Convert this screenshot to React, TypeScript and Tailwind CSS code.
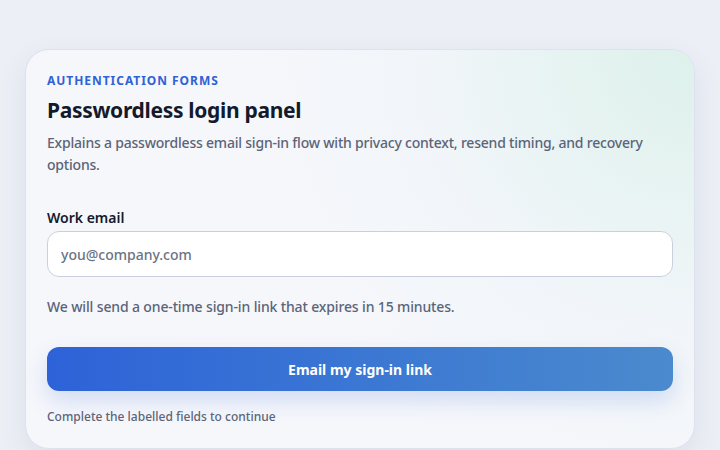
import React from 'react';

export default function App() {
  return (
    <div
      className="w-[720px] h-[450px] overflow-hidden bg-[#eceff6] pt-[49px] px-[25px]"
      style={{ fontFamily: '"Noto Sans", "Open Sans", sans-serif' }}
    >
      <div className="relative h-[400px] rounded-[24px] border border-[#dde2ec] bg-[#f6f7fb] shadow-[0_10px_30px_rgba(30,50,90,0.08)] overflow-hidden">
        {/* soft tint top-right */}
        <div className="pointer-events-none absolute inset-0 bg-[radial-gradient(circle_at_100%_0%,rgba(200,236,222,0.55),rgba(230,242,245,0.3)_35%,rgba(246,247,251,0)_60%)]" />

        <div className="relative flex flex-col px-[21px] pt-[23px]">
          <div className="text-[12px] font-bold tracking-[0.08em] uppercase text-[#2f62d5] leading-[16px]">
            Authentication forms
          </div>
          <h1 className="mt-[6px] text-[21px] font-bold text-[#141a2b] leading-[30px] tracking-[-0.015em]">
            Passwordless login panel
          </h1>
          <p className="mt-[7px] text-[14px] font-medium leading-[22px] text-[#5b6478] tracking-[-0.015em] pr-[20px]">
            Explains a passwordless email sign-in flow with privacy context, resend timing, and recovery options.
          </p>

          <label className="mt-[32px] text-[14px] font-semibold text-[#141a2b] leading-[20px]">
            Work email
          </label>
          <input
            type="email"
            placeholder="you@company.com"
            className="mt-[3px] h-[46px] w-full rounded-[12px] border border-[#c9cfdc] bg-white px-[13px] text-[14px] font-medium text-[#141a2b] placeholder:text-[#6b7385] outline-none"
          />

          <p className="mt-[19px] text-[14px] font-medium leading-[22px] text-[#5b6478] tracking-[-0.01em]">
            We will send a one-time sign-in link that expires in 15 minutes.
          </p>

          <button className="mt-[29px] h-[44px] w-full rounded-[12px] bg-gradient-to-r from-[#2e62d8] to-[#4b8acd] text-[14px] font-bold text-white shadow-[0_10px_22px_rgba(47,98,213,0.18)]">
            Email my sign-in link
          </button>

          <p className="mt-[18px] text-[12px] font-medium leading-[16px] text-[#5b6478]">
            Complete the labelled fields to continue
          </p>
        </div>
      </div>
    </div>
  );
}
